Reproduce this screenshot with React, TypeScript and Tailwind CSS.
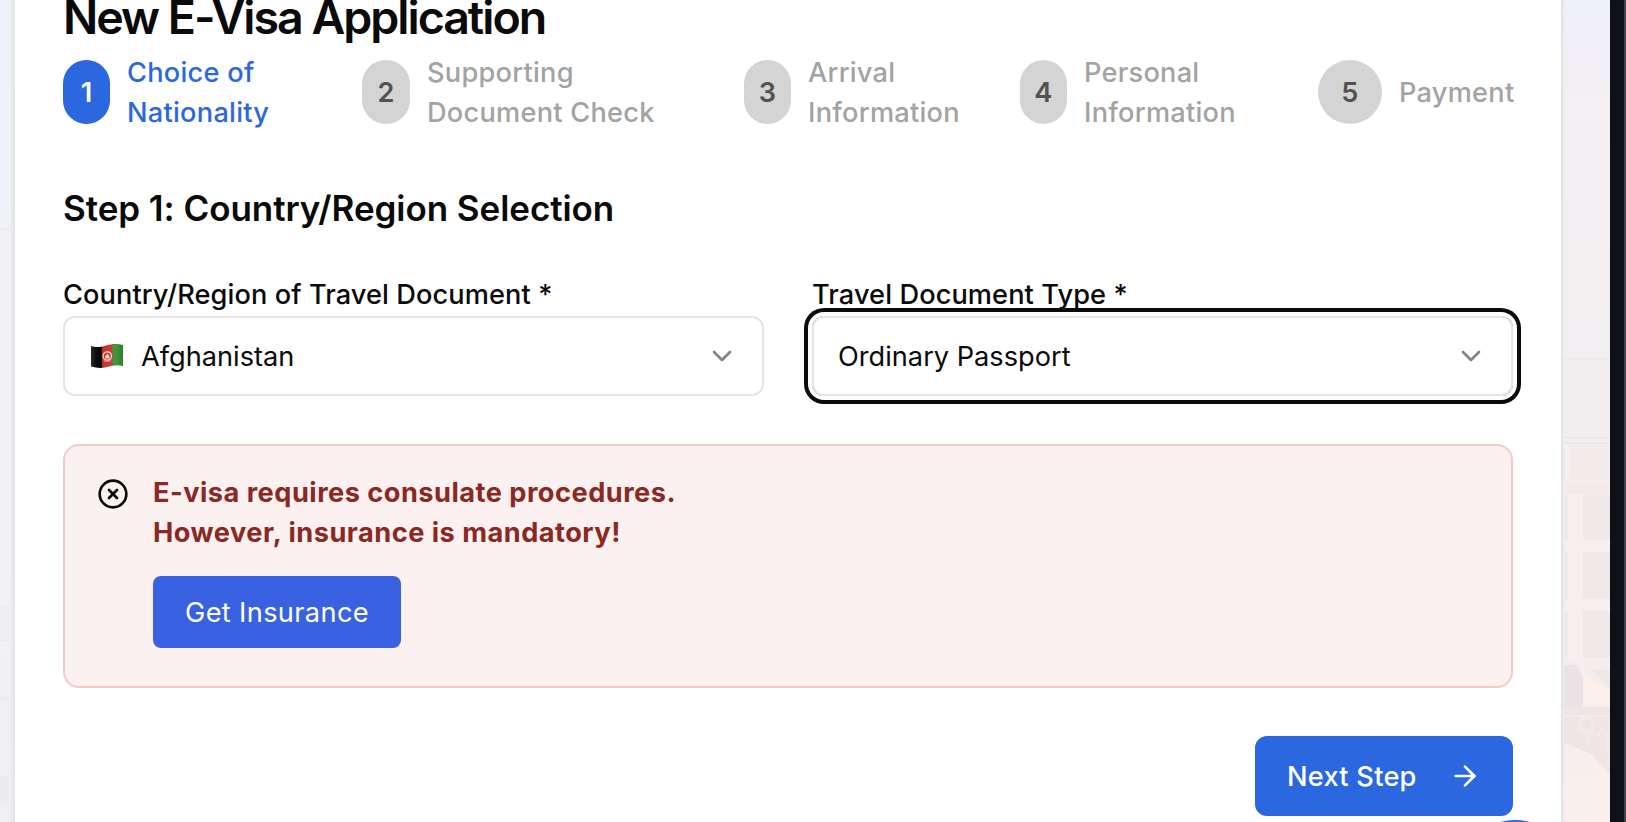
import { ArrowRight, ChevronDown, CircleX } from "lucide-react";

const steps = [
  { n: 1, lines: ["Choice of", "Nationality"], cell: "w-[299px]", pill: "w-[47px] bg-[#2b68df] text-white", text: "text-[#2b68df]" },
  { n: 2, lines: ["Supporting", "Document Check"], cell: "w-[382px]", pill: "w-12 bg-[#d4d4d4] text-[#525252]", text: "text-[#a3a3a3]" },
  { n: 3, lines: ["Arrival", "Information"], cell: "w-[276px]", pill: "w-[47px] bg-[#d4d4d4] text-[#525252]", text: "text-[#a3a3a3]" },
  { n: 4, lines: ["Personal", "Information"], cell: "w-[298px]", pill: "w-[47px] bg-[#d4d4d4] text-[#525252]", text: "text-[#a3a3a3]" },
  { n: 5, lines: ["Payment"], cell: "w-[195px]", pill: "w-16 bg-[#d4d4d4] text-[#525252]", text: "text-[#a3a3a3]" },
];

function AfghanFlag() {
  return (
    <svg width="34" height="26" viewBox="0 0 34 26" className="ml-px shrink-0">
      <defs>
        <clipPath id="flag">
          <path d="M1 3C7 5 10 4 16 2.5S27 .5 33 2V23C27 21.500 23 22.500 17 24S7 25 1 23.500Z" />
        </clipPath>
        <linearGradient id="wave">
          <stop offset="0" stopColor="#fff" stopOpacity=".18" />
          <stop offset=".25" stopColor="#000" stopOpacity=".1" />
          <stop offset=".65" stopColor="#fff" stopOpacity=".06" />
          <stop offset="1" stopColor="#000" stopOpacity=".2" />
        </linearGradient>
      </defs>
      <g clipPath="url(#flag)">
        <rect width="12" height="26" fill="#080808" />
        <rect x="12" width="11" height="26" fill="#c62f2b" />
        <rect x="22.500" width="12" height="26" fill="#33912b" />
        <circle cx="17.300" cy="13" r="4.200" fill="none" stroke="#f3dfcf" strokeWidth="1.300" />
        <path d="M15.200 15.500v-2.500l2.100-2.300 2.100 2.300v2.500z" fill="#eed3c1" />
        <path d="M14 18h6.600" stroke="#e9b8a5" strokeWidth="1" />
        <rect width="34" height="26" fill="url(#wave)" />
      </g>
    </svg>
  );
}

function LeftScene() {
  return (
    <svg width="13" height="822" className="shrink-0">
      <defs>
        <linearGradient id="sky" x2="0" y2="1">
          <stop offset="0" stopColor="#eef1f8" />
          <stop offset=".5" stopColor="#f1f2f8" />
          <stop offset="1" stopColor="#efeff4" />
        </linearGradient>
      </defs>
      <rect width="13" height="822" fill="url(#sky)" />
      <path d="M0 228h12v2H0zM0 639h12v2H0zM0 697h12v3H0z" fill="#ebecf2" />
      <rect y="606" width="12" height="32" fill="#ededf3" />
      <rect y="642" width="10" height="20" fill="#f2f0f4" />
      <rect y="700" width="12" height="42" fill="#f1eff4" />
      <rect y="776" width="10" height="28" fill="#ebecf2" />
      <rect x="11" width="2" height="822" fill="#e9e9ee" />
    </svg>
  );
}

function RightScene() {
  return (
    <svg width="47" height="822" className="shrink-0">
      <defs>
        <linearGradient id="dusk" x2="0" y2="1">
          <stop offset="0" stopColor="#eff0f8" />
          <stop offset=".12" stopColor="#f3eff3" />
          <stop offset=".5" stopColor="#f3eeef" />
          <stop offset=".8" stopColor="#f3edee" />
          <stop offset="1" stopColor="#faefec" />
        </linearGradient>
      </defs>
      <rect width="47" height="822" fill="url(#dusk)" />
      <path d="M0 318Q12 306 47 310V358H0Z" fill="#f2eff2" />
      <path d="M0 359H47" stroke="#ece7ea" />
      <rect y="360" width="47" height="76" fill="#f2edee" />
      <path d="M0 437.500H47M0 443H47" stroke="#eae3e7" strokeWidth="1.500" />
      <rect y="445" width="47" height="34" fill="#f2ebeb" />
      <rect x="2" y="444" width="4" height="34" fill="#f6f0f0" />
      <rect y="482" width="47" height="12" fill="#f6e9e9" />
      <rect y="494" width="47" height="165" fill="#f5eff0" />
      <path d="M0 495h5v45H0zM20 495h27v45H20zM0 552h5v47H0zM20 552h27v47H20zM0 611h5v47H0zM20 611h27v47H20z" fill="#efe9e9" />
      <path d="M26 495v28h21M36 495v28M26 552v28h21M36 552v28M26 611v28h21M36 611v28" fill="none" stroke="#f2e6e6" />
      <path d="M0 665H14L20 677V707H0Z" fill="#eae3e5" />
      <path d="M20 673L32 681L47 690V706H20Z" fill="#fbf0ec" />
      <path d="M28 670H47V688Z" fill="#eee7e8" />
      <path d="M0 707H47V773L28 754L0 742Z" fill="#efe5e5" />
      <path d="M0 716H47" stroke="#f5eaea" strokeWidth="2" />
      <circle cx="23" cy="725" r="7" fill="none" stroke="#f7e9e6" strokeWidth="3" />
      <path d="M22 731l3 15 3-14 7 4 4-7 5 8v18" fill="none" stroke="#f5e9e7" strokeWidth="2" />
      <rect width="1" height="822" fill="#ecebed" />
    </svg>
  );
}

export default function App() {
  return (
    <div className="relative flex h-[822px] w-[1626px] overflow-hidden bg-[#101118] font-['Inter',sans-serif] text-[27.2px] leading-10 text-[#0a0a0a]">
      <LeftScene />
      <main className="flex w-[1550px] shrink-0 flex-col border-x-2 border-[#e5e5e5] bg-white px-12">
        <h1 className="h-[52px] whitespace-nowrap text-[46.5px] font-semibold leading-[35px] tracking-[-0.043em]">
          New E-Visa Application
        </h1>
        <ol className="flex h-20 items-center">
          {steps.map((s) => (
            <li key={s.n} className={`flex shrink-0 items-center gap-[17px] font-medium tracking-[0.25px] ${s.cell} ${s.text}`}>
              <span className={`flex h-16 shrink-0 items-center justify-center rounded-full pt-px font-semibold ${s.pill}`}>{s.n}</span>
              <span className="whitespace-nowrap pt-px">
                {s.lines.map((l) => (
                  <span key={l} className="block">{l}</span>
                ))}
              </span>
            </li>
          ))}
        </ol>
        <h2 className="mt-[53px] h-12 whitespace-nowrap text-[35px] font-semibold leading-[47px] tracking-[-0.06px]">Step 1: Country/Region Selection</h2>
        <div className="mt-[41px] grid grid-cols-2 gap-12">
          <div>
            <label className="block h-[42px] whitespace-nowrap pt-px font-medium tracking-[0.09px]">Country/Region of Travel Document *</label>
            <button className="flex h-20 w-full items-center rounded-xl border-2 border-[#e5e5e5] px-6">
              <AfghanFlag />
              <span className="ml-[17px] pt-px">Afghanistan</span>
              <ChevronDown size={32} className="ml-auto opacity-50" />
            </button>
          </div>
          <div>
            <label className="block h-[42px] whitespace-nowrap pt-px font-medium tracking-[0.09px]">Travel Document Type *</label>
            <button className="flex h-20 w-full items-center justify-between rounded-xl border-2 border-[#e5e5e5] px-6 ring-4 ring-[#0a0a0a] ring-offset-4 ring-offset-white">
              <span className="pt-px">Ordinary Passport</span>
              <ChevronDown size={32} className="opacity-50" />
            </button>
          </div>
        </div>
        <section className="mt-12 flex h-[244px] shrink-0 gap-6 rounded-2xl border-2 border-[#f6c9c9] bg-[#fcf1f1] px-8 pt-[26px]">
          <CircleX size={32} className="mt-[6px] shrink-0" />
          <div>
            <p className="whitespace-nowrap pt-px font-bold tracking-[0.48px] text-[#8c2822]">
              <span className="block">E-visa requires consulate procedures.</span>
              <span className="block">However, insurance is mandatory!</span>
            </p>
            <button className="mt-[23px] flex h-[72px] w-[248px] items-center justify-center whitespace-nowrap rounded-lg bg-[#3962e3] pt-px tracking-[0.35px] text-white">
              Get Insurance
            </button>
          </div>
        </section>
        <button className="mt-12 flex h-20 w-[258px] shrink-0 items-center justify-between self-end whitespace-nowrap rounded-xl bg-[#2b68df] px-8 font-medium tracking-[0.25px] text-white">
          <span className="pt-px">Next Step</span>
          <ArrowRight size={32} />
        </button>
      </main>
      <RightScene />
      <div className="ml-[14px] w-[2px] bg-[#414247]" />
      <div className="absolute left-[1459px] top-[820px] size-28 rounded-full bg-[#3962e3]" />
    </div>
  );
}
